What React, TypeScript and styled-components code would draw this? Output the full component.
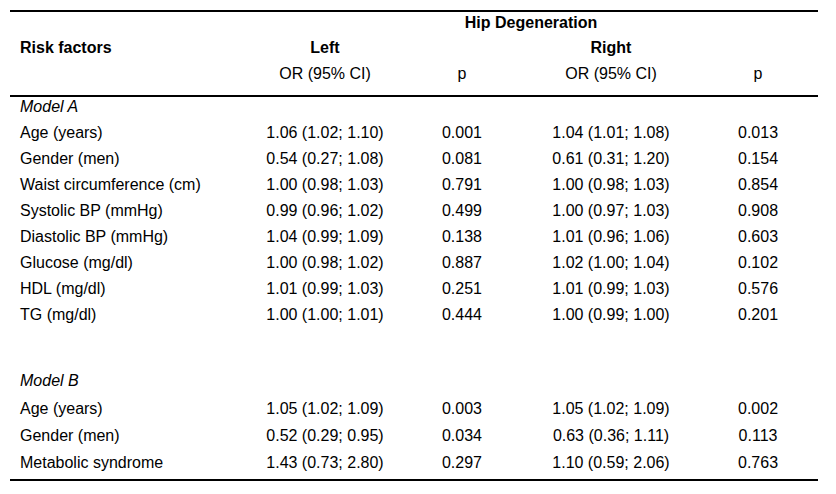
import styled, { createGlobalStyle } from "styled-components";

const GlobalStyle = createGlobalStyle`
  html, body {
    margin: 0;
    padding: 0;
    background: #fff;
  }
  body {
    font-family: "Liberation Sans", Arial, sans-serif;
    color: #000;
  }
`;

type Row = {
  label: string;
  leftOr: string;
  leftP: string;
  rightOr: string;
  rightP: string;
};

const modelA: Row[] = [
  { label: "Age (years)", leftOr: "1.06 (1.02; 1.10)", leftP: "0.001", rightOr: "1.04 (1.01; 1.08)", rightP: "0.013" },
  { label: "Gender (men)", leftOr: "0.54 (0.27; 1.08)", leftP: "0.081", rightOr: "0.61 (0.31; 1.20)", rightP: "0.154" },
  { label: "Waist circumference (cm)", leftOr: "1.00 (0.98; 1.03)", leftP: "0.791", rightOr: "1.00 (0.98; 1.03)", rightP: "0.854" },
  { label: "Systolic BP (mmHg)", leftOr: "0.99 (0.96; 1.02)", leftP: "0.499", rightOr: "1.00 (0.97; 1.03)", rightP: "0.908" },
  { label: "Diastolic BP (mmHg)", leftOr: "1.04 (0.99; 1.09)", leftP: "0.138", rightOr: "1.01 (0.96; 1.06)", rightP: "0.603" },
  { label: "Glucose (mg/dl)", leftOr: "1.00 (0.98; 1.02)", leftP: "0.887", rightOr: "1.02 (1.00; 1.04)", rightP: "0.102" },
  { label: "HDL (mg/dl)", leftOr: "1.01 (0.99; 1.03)", leftP: "0.251", rightOr: "1.01 (0.99; 1.03)", rightP: "0.576" },
  { label: "TG (mg/dl)", leftOr: "1.00 (1.00; 1.01)", leftP: "0.444", rightOr: "1.00 (0.99; 1.00)", rightP: "0.201" },
];

const modelB: Row[] = [
  { label: "Age (years)", leftOr: "1.05 (1.02; 1.09)", leftP: "0.003", rightOr: "1.05 (1.02; 1.09)", rightP: "0.002" },
  { label: "Gender (men)", leftOr: "0.52 (0.29; 0.95)", leftP: "0.034", rightOr: "0.63 (0.36; 1.11)", rightP: "0.113" },
  { label: "Metabolic syndrome", leftOr: "1.43 (0.73; 2.80)", leftP: "0.297", rightOr: "1.10 (0.59; 2.06)", rightP: "0.763" },
];

const Table = styled.table`
  margin: 10px 0 0 10px;
  width: 808px;
  table-layout: fixed;
  border-collapse: collapse;
  border-top: 2px solid #000;
  border-bottom: 2px solid #000;
  font-size: 16px;
  line-height: 18px;
`;

const Head = styled.thead`
  border-bottom: 2px solid #000;
`;

const Tr = styled.tr<{ $h: number }>`
  height: ${(p) => p.$h}px;
`;

const Th = styled.th<{ $align?: "left" | "center"; $bold?: boolean; $pad?: string }>`
  padding: ${(p) => p.$pad ?? "0"};
  text-align: ${(p) => p.$align ?? "center"};
  font-weight: ${(p) => (p.$bold ? 700 : 400)};
  vertical-align: top;
  white-space: nowrap;
`;

const Td = styled.td<{ $pad: string }>`
  padding: ${(p) => p.$pad};
  text-align: center;
  vertical-align: top;
  white-space: nowrap;
`;

const Label = styled(Td)`
  text-align: left;
  padding-left: 10px;
`;

const Section = styled.td<{ $top: number }>`
  padding: ${(p) => p.$top}px 0 0 10px;
  font-style: italic;
  vertical-align: top;
`;

const DataRow = ({ row, pad }: { row: Row; pad: string }) => (
  <tr>
    <Label $pad={pad}>{row.label}</Label>
    <Td $pad={pad}>{row.leftOr}</Td>
    <Td $pad={pad}>{row.leftP}</Td>
    <Td $pad={pad}>{row.rightOr}</Td>
    <Td $pad={pad}>{row.rightP}</Td>
  </tr>
);

const App = () => {
  return (
    <>
      <GlobalStyle />
      <Table>
        <colgroup>
          <col style={{ width: 240 }} />
          <col style={{ width: 150 }} />
          <col style={{ width: 124 }} />
          <col style={{ width: 174 }} />
          <col style={{ width: 120 }} />
        </colgroup>
        <Head>
          <Tr $h={23}>
            <Th />
            <Th colSpan={4} $bold $pad="2px 6px 0 0">
              Hip Degeneration
            </Th>
          </Tr>
          <Tr $h={27}>
            <Th $align="left" $bold $pad="5px 0 0 10px">
              Risk factors
            </Th>
            <Th $bold $pad="5px 0 0 0">Left</Th>
            <Th />
            <Th $bold $pad="5px 0 0 0">Right</Th>
            <Th />
          </Tr>
          <Tr $h={35}>
            <Th />
            <Th $pad="4px 0 0 0">OR (95% CI)</Th>
            <Th $pad="4px 0 0 0">p</Th>
            <Th $pad="4px 0 0 0">OR (95% CI)</Th>
            <Th $pad="4px 0 0 0">p</Th>
          </Tr>
        </Head>
        <tbody>
          <Tr $h={24}>
            <Section colSpan={5} $top={1}>
              Model A
            </Section>
          </Tr>
          {modelA.map((r) => (
            <DataRow key={"a" + r.label} row={r} pad="4px 0 4px" />
          ))}
          <Tr $h={39}>
            <td colSpan={5} />
          </Tr>
          <Tr $h={28}>
            <Section colSpan={5} $top={5}>
              Model B
            </Section>
          </Tr>
          {modelB.map((r, i) => (
            <DataRow
              key={"b" + r.label}
              row={r}
              pad={i === modelB.length - 1 ? "5px 0 7px" : "5px 0 4px"}
            />
          ))}
        </tbody>
      </Table>
    </>
  );
};

export default App;
